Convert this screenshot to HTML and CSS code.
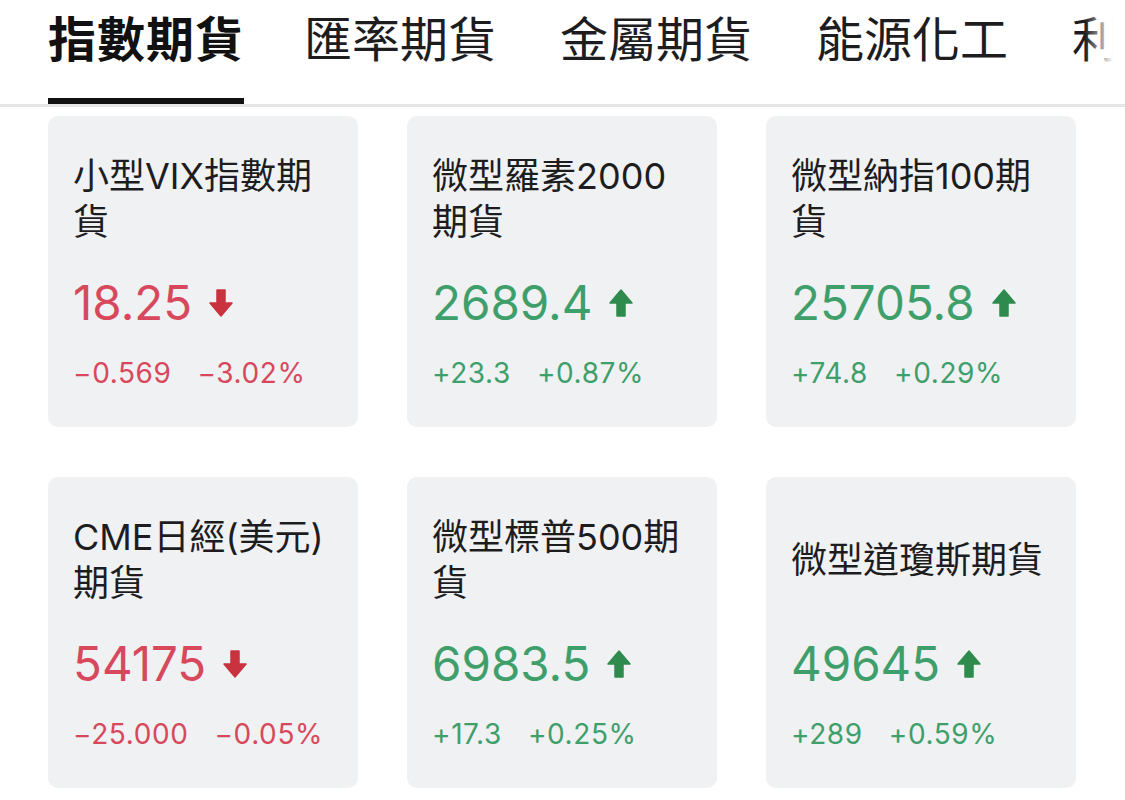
FILE: index.html
```html
<!DOCTYPE html>
<html lang="zh-Hant">
<head>
    <meta charset="UTF-8">
    <meta name="viewport" content="width=device-width, initial-scale=1.0">
    <title>指數期貨</title>
    <link rel="stylesheet" href="styles.css">
</head>
<body>
    <nav class="tabs">
        <a class="tab active" href="#">指數期貨</a>
        <a class="tab" href="#">匯率期貨</a>
        <a class="tab" href="#">金屬期貨</a>
        <a class="tab" href="#">能源化工</a>
        <a class="tab" href="#">利率期貨</a>
    </nav>

    <div class="cards">
        <div class="card">
            <div class="name">小型VIX指數期貨</div>
            <div class="price down">18.25
                <svg class="arrow" viewBox="0 0 24 28"><path d="M8 1h8v13h7l-11 13l-11-13h7z"/></svg>
            </div>
            <div class="change down"><span>−0.569</span><span>−3.02%</span></div>
        </div>

        <div class="card">
            <div class="name">微型羅素2000期貨</div>
            <div class="price up">2689.4
                <svg class="arrow" viewBox="0 0 24 28"><path d="M8 27h8v-13h7l-11-13l-11 13h7z"/></svg>
            </div>
            <div class="change up"><span>+23.3</span><span>+0.87%</span></div>
        </div>

        <div class="card">
            <div class="name">微型納指100期貨</div>
            <div class="price up">25705.8
                <svg class="arrow" viewBox="0 0 24 28"><path d="M8 27h8v-13h7l-11-13l-11 13h7z"/></svg>
            </div>
            <div class="change up"><span>+74.8</span><span>+0.29%</span></div>
        </div>

        <div class="card">
            <div class="name">CME日經(美元)期貨</div>
            <div class="price down">54175
                <svg class="arrow" viewBox="0 0 24 28"><path d="M8 1h8v13h7l-11 13l-11-13h7z"/></svg>
            </div>
            <div class="change down"><span>−25.000</span><span>−0.05%</span></div>
        </div>

        <div class="card">
            <div class="name">微型標普500期貨</div>
            <div class="price up">6983.5
                <svg class="arrow" viewBox="0 0 24 28"><path d="M8 27h8v-13h7l-11-13l-11 13h7z"/></svg>
            </div>
            <div class="change up"><span>+17.3</span><span>+0.25%</span></div>
        </div>

        <div class="card">
            <div class="name">微型道瓊斯期貨</div>
            <div class="price up">49645
                <svg class="arrow" viewBox="0 0 24 28"><path d="M8 27h8v-13h7l-11-13l-11 13h7z"/></svg>
            </div>
            <div class="change up"><span>+289</span><span>+0.59%</span></div>
        </div>
    </div>
</body>
</html>
```

FILE: styles.css
```css
body {
    margin: 0;
    font-family: Inter, "Noto Sans CJK TC", sans-serif;
    background-color: #fff;
    color: #1d1d1f;
    overflow: hidden;
}
.tabs {
    position: relative;
    display: flex;
    gap: 64px;
    padding: 0 48px;
    height: 104px;
    border-bottom: 3px solid #e6e6e8;
    overflow: hidden;
    white-space: nowrap;
}
.tabs::after {
    content: "";
    position: absolute;
    top: 0;
    right: 0;
    width: 40px;
    height: 100%;
    background: linear-gradient(to right, rgba(255, 255, 255, 0), #fff 70%);
}
.tab {
    flex-shrink: 0;
    font-size: 48px;
    line-height: 80px;
    color: #1d1d1f;
    text-decoration: none;
    border-bottom: 6px solid transparent;
    height: 98px;
    box-sizing: border-box;
}
.tab.active {
    font-weight: bold;
    letter-spacing: 1px;
    margin-right: -4px;
    color: #111;
    border-bottom-color: #111;
    height: 104px;
}
.cards {
    display: grid;
    grid-template-columns: repeat(3, 310px);
    column-gap: 49px;
    row-gap: 50px;
    padding: 9px 48px 0;
}
.card {
    background: #f0f1f3;
    border-radius: 10px;
    padding: 37px 25px 38px;
    height: 311px;
    box-sizing: border-box;
}
.name {
    font-size: 36px;
    line-height: 46px;
    height: 92px;
    display: flex;
    align-items: center;
}
.price {
    display: flex;
    align-items: center;
    gap: 17px;
    margin-top: 30px;
    font-size: 47.5px;
    line-height: 56px;
}
.arrow {
    width: 24px;
    height: 28px;
}
.arrow path {
    stroke-linejoin: round;
    stroke-width: 1.5;
}
.change {
    display: flex;
    gap: 26px;
    margin-top: 26px;
    font-size: 28px;
    letter-spacing: 0.6px;
    line-height: 32px;
}
.down {
    color: #d8485c;
}
.down .arrow path {
    fill: #c9323f;
    stroke: #c9323f;
}
.up {
    color: #3f9f6b;
}
.up .arrow path {
    fill: #2f8a4d;
    stroke: #2f8a4d;
}
```
